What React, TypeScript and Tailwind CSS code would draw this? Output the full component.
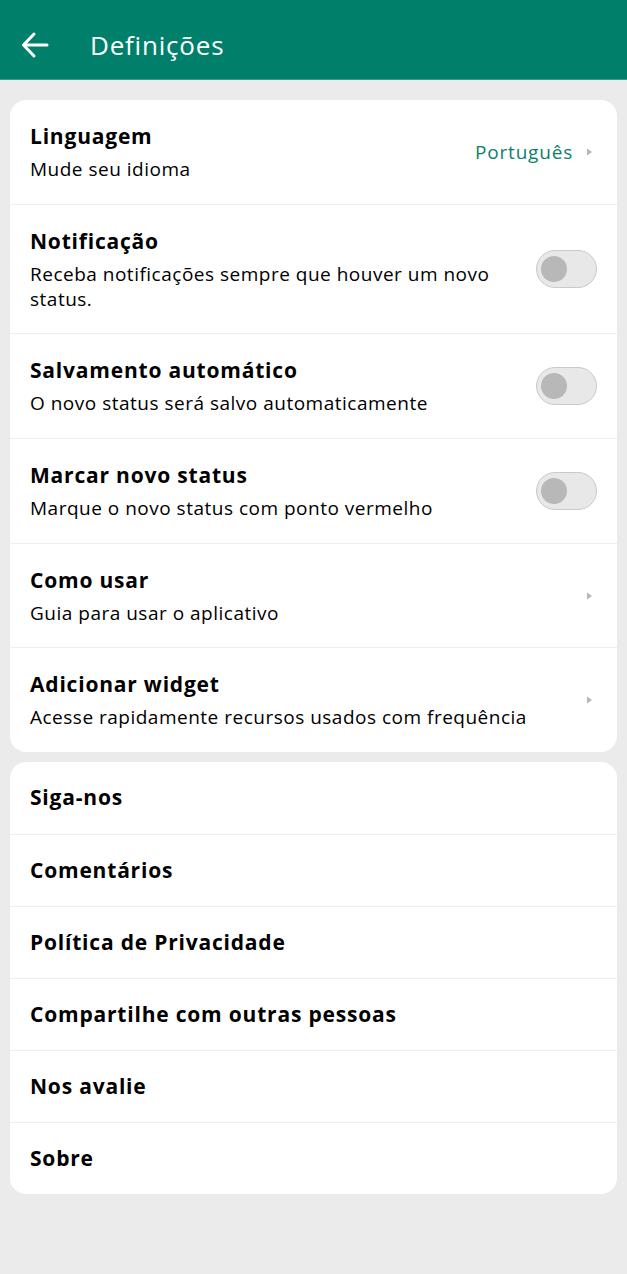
import React from "react";

const font = { fontFamily: '"Open Sans", "Noto Sans", sans-serif' };

function Toggle() {
  return (
    <div className="w-[61px] h-[38px] rounded-full bg-[#e8e8e8] border border-[#c9c9c9] flex items-center pl-[4px] shrink-0">
      <div className="w-[26px] h-[26px] rounded-full bg-[#b8b8b8]" />
    </div>
  );
}

function Chevron() {
  return (
    <svg width="7" height="10" viewBox="0 0 7 10" className="shrink-0 mr-[4px]">
      <path d="M1 1.5 L6 5 L1 8.5 Z" fill="#b5b5b5" />
    </svg>
  );
}

type Row = { title: string; sub: string; right: "toggle" | "chev" | "lang"; h: string };

const rows: Row[] = [
  { title: "Linguagem", sub: "Mude seu idioma", right: "lang", h: "h-[104px]" },
  { title: "Notificação", sub: "Receba notificações sempre que houver um novo status.", right: "toggle", h: "h-[129px]" },
  { title: "Salvamento automático", sub: "O novo status será salvo automaticamente", right: "toggle", h: "h-[105px]" },
  { title: "Marcar novo status", sub: "Marque o novo status com ponto vermelho", right: "toggle", h: "h-[105px]" },
  { title: "Como usar", sub: "Guia para usar o aplicativo", right: "chev", h: "h-[104px]" },
  { title: "Adicionar widget", sub: "Acesse rapidamente recursos usados com frequência", right: "chev", h: "h-[105px]" },
];

const links = ["Siga-nos", "Comentários", "Política de Privacidade", "Compartilhe com outras pessoas", "Nos avalie", "Sobre"];

export default function App() {
  return (
    <div className="w-[627px] h-[1274px] bg-[#ebebeb] text-black" style={font}>
      <header className="h-[80px] bg-[#00806a] flex items-center pt-[10px] border-b border-[#3a9a88]">
        <svg width="28" height="28" viewBox="0 0 28 28" className="ml-[21px]">
          <path d="M26 14 H3 M13 3 L2.5 14 L13 25" stroke="white" strokeWidth="3" fill="none" strokeLinecap="round" strokeLinejoin="round" />
        </svg>
        <h1 className="ml-[41px] text-white text-[26px] tracking-[0.8px] leading-none">Definições</h1>
      </header>

      <div className="mx-[10px] mt-[20px] bg-white rounded-[16px] overflow-hidden">
        {rows.map((r, i) => (
          <div
            key={r.title}
            className={`${r.h} flex items-center gap-[12px] pl-[20px] pr-[20px] ${i > 0 ? "border-t border-[#eeeeee]" : ""}`}
          >
            <div className="flex-1 min-w-0">
              <div className="text-[21px] tracking-[0.8px] font-bold leading-[28px]">{r.title}</div>
              <div className="text-[19px] tracking-[0.5px] leading-[25px] mt-[7px]">{r.sub}</div>
            </div>
            {r.right === "toggle" && <Toggle />}
            {r.right === "chev" && <Chevron />}
            {r.right === "lang" && (
              <div className="flex items-center gap-[13px]">
                <span className="text-[19px] tracking-[0.8px] text-[#0d7f6b]">Português</span>
                <Chevron />
              </div>
            )}
          </div>
        ))}
      </div>

      <div className="mx-[10px] mt-[10px] bg-white rounded-[16px] overflow-hidden">
        {links.map((l, i) => (
          <div key={l} className={`h-[72px] flex items-center pl-[20px] text-[21px] tracking-[0.8px] font-bold ${i > 0 ? "border-t border-[#eeeeee]" : ""}`}>
            {l}
          </div>
        ))}
      </div>
    </div>
  );
}
